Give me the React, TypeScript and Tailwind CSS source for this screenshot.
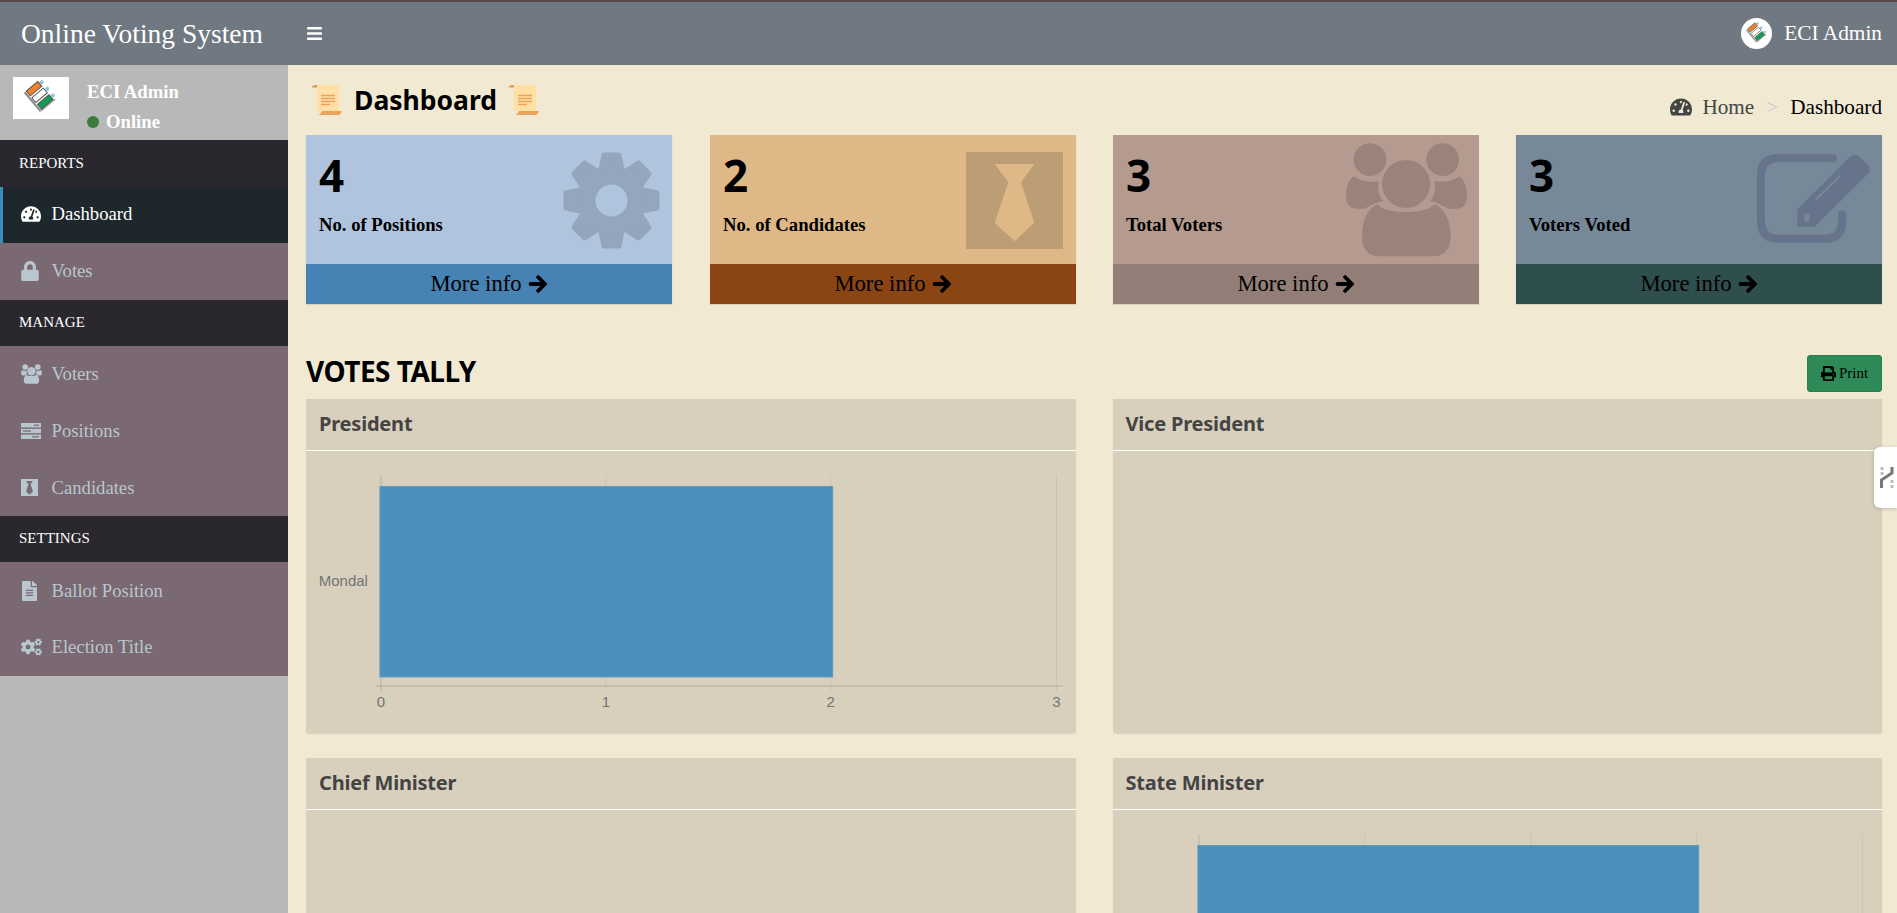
import type { ReactNode } from 'react';
import { FaArrowRight, FaBars, FaCogs, FaFileAlt, FaLock, FaPrint, FaTachometerAlt } from 'react-icons/fa';

const serif = "font-['Liberation_Serif',serif]";
const sans = "font-['Noto_Sans',sans-serif]";

function EciLogo({ className }: { className?: string }) {
  return (
    <svg viewBox="0 0 56 42" className={className}>
      <g transform="rotate(-40 27 18)">
        <rect x="16" y="6" width="2" height="25" fill="#8a8a8a" />
        <rect x="18" y="30" width="18" height="1.6" fill="#a5a5a5" />
        <rect x="19" y="6.2" width="15" height="6.2" fill="#f47f2a" stroke="#555" strokeWidth="1" />
        <rect x="19" y="14.9" width="15" height="6.2" fill="#fff" stroke="#555" strokeWidth="1" />
        <rect x="19" y="23.6" width="15" height="6.2" fill="#129c56" stroke="#555" strokeWidth="1" />
        <circle cx="36.5" cy="9.3" r="2" fill="#8fc4e0" />
        <circle cx="36.5" cy="18" r="2" fill="#8fc4e0" />
        <circle cx="36.5" cy="26.7" r="2" fill="#8fc4e0" />
      </g>
    </svg>
  );
}

function ScrollIcon() {
  return (
    <svg viewBox="0 0 30 30" className="h-[30px] w-[30px] shrink-0">
      <path d="M0 1 Q1 0 3 0 H24 Q27 0 27 3 V26 H8 Q5 26 5 23 V3 Q5 1 3 1Z" fill="#ffdfa3" />
      <path d="M0 1.5 Q1 0 3 0 H5 V2.5 H0Z" fill="#d99a5b" />
      <path d="M6 30 Q9 29 10 26 H30 Q29 29 27 30Z" fill="#e9a35c" />
      <path d="M9 10.5 H23 M9 13.5 H23 M9 16.5 H23 M9 19.5 H18" stroke="#e8a45e" strokeWidth="1.4" />
    </svg>
  );
}

function GearIcon() {
  return (
    <svg viewBox="0 0 97 97" className="h-[97px] w-[97px]">
      {[0, 45, 90, 135, 180, 225, 270, 315].map((a) => (
        <polygon
          key={a}
          points="41,3 56,3 60,22 37,22"
          transform={`rotate(${a} 48.5 48.5)`}
          fill="#94a6bd"
          stroke="#94a6bd"
          strokeWidth="5"
          strokeLinejoin="round"
        />
      ))}
      <circle cx="48.5" cy="48.5" r="34" fill="#94a6bd" />
      <circle cx="48.5" cy="48.5" r="16" fill="#b0c4de" />
    </svg>
  );
}

function TieIcon({ box, tie, className }: { box: string; tie: string; className: string }) {
  return (
    <svg viewBox="0 0 97 97" className={className}>
      <rect width="97" height="97" fill={box} />
      <polygon points="28.7,12 68.3,12 55,30.3 68.3,70.7 48.7,89.3 28.7,70.7 42.3,30.3" fill={tie} />
    </svg>
  );
}

function PeopleIcon({ fill, className }: { fill: string; className: string }) {
  const side = 'M762 170 C780 185 815 190 836 184 C830 215 840 235 850 245 C820 250 805 262 795 267 H770 C750 267 738 255 738 230 C738 200 748 178 762 170Z';
  return (
    <svg viewBox="738 70 363 342" className={className} fill={fill}>
      <circle cx="810" cy="120" r="49" />
      <circle cx="1028" cy="120" r="49" />
      <circle cx="918" cy="193" r="72" />
      <path d={side} />
      <path d={side} transform="translate(1839 0) scale(-1 1)" />
      <path d="M786 352 C786 300 805 265 832 254 C855 285 980 285 1004 254 C1032 265 1052 300 1052 352 C1052 390 1030 410 1000 410 H838 C808 410 786 390 786 352Z" />
    </svg>
  );
}

function EditIcon() {
  return (
    <svg viewBox="772 90 345 275" className="h-[92px] w-[115px]">
      <path d="M1000 108 H835 Q784 108 784 160 V298 Q784 350 835 350 H975 Q1027 350 1027 298 V277" fill="none" stroke="#65748a" strokeWidth="24" strokeLinecap="round" />
      <path d="M893 262 L1052 103 Q1065 92 1078 103 L1105 130 Q1115 143 1105 155 L945 314 H893Z" fill="#65748a" />
      <path d="M948 233 L1022 160" stroke="#778899" strokeWidth="6" />
      <path d="M914 274 L930 278 L930 296 L914 296Z" fill="#778899" />
    </svg>
  );
}

function ServerIcon() {
  return (
    <svg viewBox="0 0 20 16" className="h-[16px] w-[20px]">
      <rect y="0" width="20" height="4.4" fill="#b8c7ce" />
      <rect y="5.8" width="20" height="4.4" fill="#b8c7ce" />
      <rect y="11.6" width="20" height="4.4" fill="#b8c7ce" />
      <rect x="13" y="1.6" width="5" height="1.2" fill="#7a6872" />
      <rect x="2" y="7.4" width="8" height="1.2" fill="#7a6872" />
      <rect x="11" y="13.2" width="7" height="1.2" fill="#7a6872" />
    </svg>
  );
}

function SideHeader({ label }: { label: string }) {
  return (
    <div className="flex h-[46.5px] items-center bg-[#2a272e] pb-[1px] pl-[19px] text-[15px] text-white">{label}</div>
  );
}

function SideItem({ icon, label, active }: { icon: ReactNode; label: string; active?: boolean }) {
  return (
    <div
      className={
        active
          ? 'flex h-[56.6px] items-center border-l-[3px] border-[#3c8dbc] bg-[#1e282c] pb-[1px] pl-[18px] text-[18.67px] text-white'
          : 'flex h-[56.6px] items-center bg-[#7a6872] pl-[21px] text-[18.67px] text-[#b8c7ce]'
      }
    >
      <span className="flex w-[30.5px] shrink-0 items-center">{icon}</span>
      {label}
    </div>
  );
}

function StatCard(props: { count: number; label: string; bg: string; foot: string; icon: ReactNode; iconPos: string }) {
  return (
    <div className={`relative h-[169px] w-[366px] ${props.bg} shadow-[0_1px_1px_rgba(0,0,0,0.1)]`}>
      <div className="h-[129px] px-[13px] pt-[15px]">
        <div className={`${sans} text-[44px] leading-[50px] font-bold text-black`}>{props.count}</div>
        <div className="mt-[13px] text-[18.67px] leading-[24px] font-bold text-black">{props.label}</div>
      </div>
      <div className={`absolute ${props.iconPos}`}>{props.icon}</div>
      <div className={`flex h-[40px] items-center justify-center gap-[6px] ${props.foot} text-[22.67px] text-black`}>
        More info <FaArrowRight className="h-[20px] w-[20px] stroke-[24px]" />
      </div>
    </div>
  );
}

function Panel({ title, children }: { title: string; children?: ReactNode }) {
  return (
    <div className="h-[334px] rounded-b-[3px] bg-[#d8d0bc] shadow-[0_1px_1px_rgba(0,0,0,0.1)]">
      <div className={`flex h-[51px] items-center pb-[2px] pl-[13px] ${sans} text-[20px] font-bold tracking-[-0.2px] text-[#444]`}>{title}</div>
      <div className="h-px bg-white" />
      {children}
    </div>
  );
}

function BarChart(props: { ticks: number[]; barX: number; barW: number; label?: string; axisFrom: number; axisTo: number; showTicks?: boolean }) {
  return (
    <svg viewBox="0 0 770 282" className="h-[282px] w-full">
      {props.ticks.map((x, i) => (
        <line key={x} x1={x} x2={x} y1="24" y2="241" stroke="#000" strokeOpacity={i === 0 ? 0.07 : 0.06} strokeWidth={i === 0 ? 2 : 1} />
      ))}
      <line x1={props.axisFrom} x2={props.axisTo} y1="235" y2="235" stroke="#000" strokeOpacity="0.08" strokeWidth="2" />
      <rect x={props.barX} y="35.5" width={props.barW} height="190.5" fill="#4a90bc" stroke="#5a9ac2" strokeWidth="1" />
      {props.label && (
        <text x="62" y="135" textAnchor="end" fontFamily="Liberation Sans, sans-serif" fontSize="15" fill="#737373">
          {props.label}
        </text>
      )}
      {props.showTicks &&
        props.ticks.map((x, i) => (
          <text key={x} x={x} y="256" textAnchor="middle" fontFamily="Liberation Sans, sans-serif" fontSize="15" fill="#737373">
            {i}
          </text>
        ))}
    </svg>
  );
}

export default function App() {
  return (
    <div className={`relative flex h-[913px] flex-col overflow-hidden bg-[#f1e9d2] ${serif}`}>
      {/* Top bar */}
      <header className="flex h-[65px] shrink-0 items-center border-t-2 border-[#5a4a4a] bg-[#707882] text-white">
        <div className="w-[306px] shrink-0 pl-[21px] text-[27.5px]">Online Voting System</div>
        <FaBars className="h-[17px] w-[17px]" />
        <div className="ml-auto flex items-center gap-[12px] pr-[15px]">
          <span className="flex h-[31px] w-[31px] items-center justify-center overflow-hidden rounded-full bg-white">
            <EciLogo className="h-[27px] w-[36px] shrink-0" />
          </span>
          <span className="text-[21.33px]">ECI Admin</span>
        </div>
      </header>

      <div className="flex min-h-0 flex-1">
        {/* Sidebar */}
        <aside className="w-[288px] shrink-0 bg-[#b8b8b8]">
          <div className="flex h-[75px] items-start pt-[12px] pl-[13px]">
            <div className="h-[42px] w-[56px] shrink-0 bg-white">
              <EciLogo className="h-[42px] w-[56px]" />
            </div>
            <div className="ml-[18px] text-[18.67px] font-bold text-white">
              <div className="pt-[5px] leading-[20px]">ECI Admin</div>
              <div className="mt-[10px] flex items-center leading-[20px]">
                <span className="mr-[7px] h-[12px] w-[12px] rounded-full bg-[#3c7a3c]" />
                Online
              </div>
            </div>
          </div>
          <SideHeader label="REPORTS" />
          <SideItem active label="Dashboard" icon={<FaTachometerAlt className="h-[20px] w-[20px]" />} />
          <SideItem label="Votes" icon={<FaLock className="h-[20px] w-[18px]" />} />
          <SideHeader label="MANAGE" />
          <SideItem label="Voters" icon={<PeopleIcon fill="#b8c7ce" className="h-[20px] w-[21px]" />} />
          <SideItem label="Positions" icon={<ServerIcon />} />
          <SideItem label="Candidates" icon={<TieIcon box="#b8c7ce" tie="#7a6872" className="h-[17px] w-[17px]" />} />
          <SideHeader label="SETTINGS" />
          <SideItem label="Ballot Position" icon={<FaFileAlt className="h-[20px] w-[17px]" />} />
          <SideItem label="Election Title" icon={<FaCogs className="h-[20px] w-[21px]" />} />
        </aside>

        {/* Content */}
        <main className="min-w-0 flex-1 pr-[15px] pl-[18px]">
          <div className="flex h-[70px] items-start justify-between">
            <div className="mt-[20px] flex items-center gap-[12px] pl-[6px] text-black">
              <ScrollIcon />
              <h1 className={`${sans} text-[26.5px] leading-[30px] font-bold`}>Dashboard</h1>
              <ScrollIcon />
            </div>
            <div className="mt-[29px] flex items-center text-[21.2px] leading-[26px]">
              <FaTachometerAlt className="mr-[10px] h-[22px] w-[22px] text-[#444]" />
              <span className="text-[#444]">Home</span>
              <span className="px-[12px] text-[#ccc]">&gt;</span>
              <span className="text-black">Dashboard</span>
            </div>
          </div>

          <div className="grid grid-cols-[404px_403px_403px_366px]">
            <StatCard count={4} label="No. of Positions" bg="bg-[#b0c4de]" foot="bg-[#4682b4]" iconPos="top-[17px] right-[12px]" icon={<GearIcon />} />
            <StatCard count={2} label="No. of Candidates" bg="bg-[#deb887]" foot="bg-[#8b4513]" iconPos="top-[17px] right-[13px]" icon={<TieIcon box="#bd9d73" tie="#deb887" className="h-[97px] w-[97px]" />} />
            <StatCard count={3} label="Total Voters" bg="bg-[#b59a8f]" foot="bg-[#927e77]" iconPos="top-[8px] right-[12px]" icon={<PeopleIcon fill="#9a837a" className="h-[114px] w-[121px]" />} />
            <StatCard count={3} label="Voters Voted" bg="bg-[#778899]" foot="bg-[#2f4f4f]" iconPos="top-[17px] right-[10px]" icon={<EditIcon />} />
          </div>

          <div className="mt-[51px] flex h-[37px] items-center justify-between">
            <h2 className={`${sans} pb-[6px] text-[28px] font-bold tracking-[-0.5px] text-black`}>VOTES TALLY</h2>
            <button className="flex h-[37px] w-[75px] items-center justify-center gap-[3px] rounded-[3px] border border-[#26804d] bg-[#2e8b57] text-[15px] text-black">
              <FaPrint className="h-[15px] w-[15px]" /> Print
            </button>
          </div>

          <div className="mt-[7px] grid grid-cols-2 gap-x-[37px] gap-y-[25px]">
            <Panel title="President">
              <BarChart ticks={[75, 300, 525, 751]} barX={74} barW={453} label="Mondal" axisFrom={70} axisTo={757} showTicks />
            </Panel>
            <Panel title="Vice President" />
            <Panel title="Chief Minister" />
            <Panel title="State Minister">
              <BarChart ticks={[86, 252, 418, 584, 750]} barX={85} barW={501} axisFrom={80} axisTo={756} />
            </Panel>
          </div>
        </main>
      </div>

      {/* Floating side tab */}
      <div className="absolute top-[447px] right-0 flex h-[61px] w-[23px] items-center rounded-l-[6px] bg-white pl-[6px] shadow-[0_1px_4px_rgba(0,0,0,0.2)]">
        <svg viewBox="0 0 14 22" className="h-[22px] w-[14px]" fill="none">
          <path d="M1.5 21 V13 L12 6 V0" stroke="#777" strokeWidth="3" />
          <path d="M2 0 V9 M12 13 V22" stroke="#bbb" strokeWidth="3" strokeDasharray="3 2" />
        </svg>
      </div>
    </div>
  );
}
